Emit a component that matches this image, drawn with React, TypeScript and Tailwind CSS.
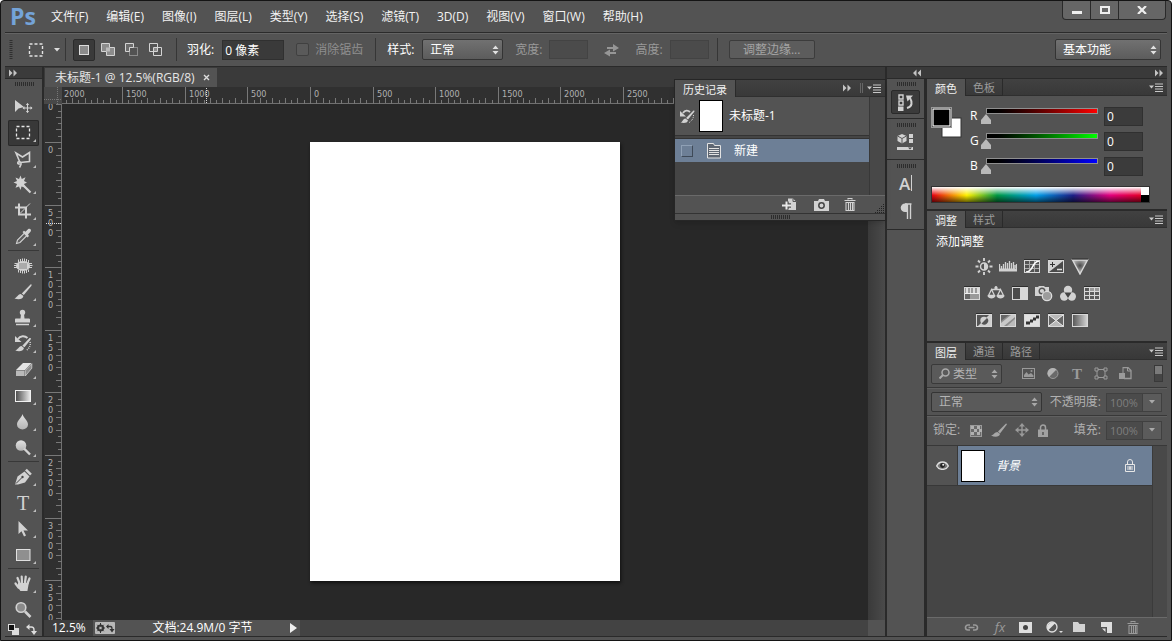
import React from "react";
import type { ReactNode } from "react";

const LIGHT = "#d2d2d2";
const DIM = "#9a9a9a";

function Svg({ w, h, children, className = "" }: { w: number; h: number; children: ReactNode; className?: string }) {
  return (
    <svg width={w} height={h} viewBox={`0 0 ${w} ${h}`} className={`shrink-0 ${className}`} aria-hidden="true">
      {children}
    </svg>
  );
}

/* ---------- small shared pieces ---------- */

function UpDown({ color = "#dcdcdc" }: { color?: string }) {
  return (
    <Svg w={7} h={10}>
      <path d="M3.5 0.5L6.5 4h-6zM3.5 9.5L6.5 6h-6z" fill={color} />
    </Svg>
  );
}

function Chevrons({ left = false }: { left?: boolean }) {
  return (
    <Svg w={10} h={8} className={left ? "rotate-180" : ""}>
      <path d="M1 0.5l3.5 3.5L1 7.5zM5.5 0.5L9 4 5.5 7.5z" fill="#c4c4c4" />
    </Svg>
  );
}

function PanelMenu() {
  return (
    <button aria-label="面板菜单" className="flex items-center">
      <Svg w={15} h={9}>
        <path d="M0 2.5h5L2.5 5.5z" fill="#c8c8c8" />
        <path d="M6 1h8M6 3.5h8M6 6h8M6 8.5h8" stroke="#c8c8c8" />
      </Svg>
    </button>
  );
}

function Grip() {
  return (
    <Svg w={20} h={4}>
      <path d="M1 2h19" stroke="#2c2c2c" strokeWidth="4" strokeDasharray="1 1" />
    </Svg>
  );
}

function Dropdown({ label, value, className, dim = false }: { label: string; value: string; className: string; dim?: boolean }) {
  return (
    <div className={`relative ${className}`}>
      <select
        aria-label={label}
        className={`h-full w-full appearance-none rounded-xs border border-[#343434] px-[7px] text-xs leading-none outline-none ${
          dim ? "bg-[#5a5a5a] text-[#b4b4b4]" : "bg-linear-to-b from-[#717171] to-[#5c5c5c] text-white"
        }`}
      >
        <option>{value}</option>
      </select>
      <div className="pointer-events-none absolute inset-y-0 right-1 flex items-center">
        <UpDown color={dim ? "#a8a8a8" : "#e0e0e0"} />
      </div>
    </div>
  );
}

function Tabs({ tabs, children }: { tabs: string[]; children?: ReactNode }) {
  return (
    <div className="flex h-[17px] shrink-0 items-stretch bg-linear-to-b from-[#414141] to-[#383838] text-[11px] leading-none">
      {tabs.map((tab, i) => (
        <button
          key={tab}
          className={
            i === 0
              ? "border-r border-[#2a2a2a] bg-[#535353] px-2 pt-px text-[#f0f0f0]"
              : "border-r border-b border-[#2a2a2a] px-[7px] pt-px text-[#9b9b9b]"
          }
        >
          {tab}
        </button>
      ))}
      <div className="flex flex-1 items-center justify-end gap-1 border-b border-[#2f2f2f] pr-[3px]">{children ?? <PanelMenu />}</div>
    </div>
  );
}

/* ---------- menu bar ---------- */

const menus = ["文件(F)", "编辑(E)", "图像(I)", "图层(L)", "类型(Y)", "选择(S)", "滤镜(T)", "3D(D)", "视图(V)", "窗口(W)", "帮助(H)"];

function MenuBar() {
  return (
    <header className="flex h-[31px] shrink-0 items-center pr-[5px] pl-[9px]">
      <span className="w-[41px] font-['Open_Sans'] text-[23px] leading-none font-bold text-[#74a3d8]">Ps</span>
      <nav className="flex flex-1 gap-[18px] text-xs text-[#f2f2f2]">
        {menus.map((m) => (
          <button key={m} className="whitespace-nowrap">
            {m}
          </button>
        ))}
      </nav>
      <div className="flex h-[19px] self-start rounded-b-sm border border-t-0 border-[#2a2a2a] bg-[#666666]">
        <button aria-label="最小化" className="flex w-7 items-center justify-center border-r border-[#2a2a2a]">
          <Svg w={10} h={10}>
            <path d="M0 7.5h10" stroke="#eee" strokeWidth="3" />
          </Svg>
        </button>
        <button aria-label="最大化" className="flex w-7 items-center justify-center border-r border-[#2a2a2a]">
          <Svg w={10} h={8}>
            <rect x="1" y="1" width="8" height="6" fill="none" stroke="#eee" strokeWidth="2" />
          </Svg>
        </button>
        <button aria-label="关闭" className="flex w-[46px] items-center justify-center">
          <Svg w={10} h={8}>
            <path d="M1 0l8 8M9 0L1 8" stroke="#eee" strokeWidth="2.2" />
          </Svg>
        </button>
      </div>
    </header>
  );
}

/* ---------- options bar ---------- */

function Divider() {
  return <div className="h-[23px] w-px bg-[#363636]" />;
}

function OptionsBar() {
  return (
    <div className="mx-1 flex h-[34px] shrink-0 items-center border-t border-[#2b2b2b] text-xs whitespace-nowrap text-white shadow-[inset_0_1px_0_#646464]">
      <Svg w={4} h={20} className="ml-1">
        <path d="M2 0v20" stroke="#303030" strokeWidth="3" strokeDasharray="1 1" />
      </Svg>
      <button aria-label="矩形选框" className="ml-[15px] flex items-center gap-[10px]">
        <Svg w={16} h={14}>
          <rect x="1.5" y="1" width="13" height="12" fill="none" stroke="#e4e4e4" strokeWidth="1.4" strokeDasharray="3 2" />
        </Svg>
        <Svg w={6} h={4}>
          <path d="M0 0h6L3 3.5z" fill="#ddd" />
        </Svg>
      </button>
      <div className="mr-[7px] ml-[5px]">
        <Divider />
      </div>
      <button aria-label="新选区" className="flex size-[22px] items-center justify-center rounded-xs border border-[#2b2b2b] bg-[#3a3a3a]">
        <Svg w={12} h={12}>
          <rect x="1.5" y="1.5" width="9" height="9" fill="#8c8c8c" stroke="#ddd" />
        </Svg>
      </button>
      <div className="ml-[6px] flex gap-[10px]">
        <button aria-label="添加到选区">
          <Svg w={14} h={14}>
            <path d="M.5.5h8v4h5v8h-8v-4h-5z" fill="#8c8c8c" stroke="#d4d4d4" />
            <path d="M5 4.500h4v4H5z" fill="#bbb" />
          </Svg>
        </button>
        <button aria-label="从选区减去">
          <Svg w={14} h={14}>
            <rect x="4.5" y="4.500" width="8" height="8" fill="none" stroke="#8c8c8c" />
            <path d="M.5.5h8v4h-4v4h-4z" fill="#6c6c6c" stroke="#d4d4d4" />
          </Svg>
        </button>
        <button aria-label="与选区交叉">
          <Svg w={14} h={14}>
            <path d="M.5.5h8v8h-8z M4.500 4.500h8v8h-8z" fill="none" stroke="#d4d4d4" />
            <path d="M5 5h3v3H5z" fill="#8c8c8c" />
          </Svg>
        </button>
      </div>
      <div className="mr-[10px] ml-[13px]">
        <Divider />
      </div>
      <label className="flex items-center gap-2">
        羽化:
        <input defaultValue="0 像素" className="h-5 w-[62px] border border-[#303030] bg-[#3a3a3a] px-[2px] text-xs outline-none" />
      </label>
      <label className="ml-3 flex items-center gap-[6px] text-[#8f8f8f]">
        <input type="checkbox" disabled className="size-[13px] appearance-none rounded-xs border border-[#404040] bg-[#5a5a5a]" />
        消除锯齿
      </label>
      <div className="mr-[11px] ml-3">
        <Divider />
      </div>
      <span>样式:</span>
      <Dropdown label="样式" value="正常" className="ml-2 h-[21px] w-[81px]" />
      <label className="ml-3 flex items-center gap-[7px] text-[#9a9a9a]">
        宽度:
        <input disabled className="h-[19px] w-[39px] border border-[#434343] bg-[#4b4b4b]" />
      </label>
      <button aria-label="高度和宽度互换" className="mx-4">
        <Svg w={15} h={14}>
          <path d="M3 4h6V1l6 4-6 3.500V6H3z M12 9H6V6.500L0 10l6 3.500V11h6z" fill="#969696" />
        </Svg>
      </button>
      <label className="flex items-center gap-[7px] text-[#9a9a9a]">
        高度:
        <input disabled className="h-[19px] w-[39px] border border-[#434343] bg-[#4b4b4b]" />
      </label>
      <div className="mr-[11px] ml-2">
        <Divider />
      </div>
      <button className="h-[19px] w-[86px] rounded-xs border border-[#3c3c3c] bg-[#5c5c5c] text-[#a4a4a4]">调整边缘...</button>
      <div className="flex-1" />
      <Dropdown label="工作区" value="基本功能" className="mr-[6px] h-[21px] w-[106px]" />
    </div>
  );
}

/* ---------- toolbar, icons drawn on a 31x26 grid ---------- */

type Tool = { name: string; art: ReactNode; single?: boolean };

const groups: Tool[][] = [
  [
    {
      name: "移动",
      single: true,
      art: (
        <>
          <path d="M7 6v12l3.500-3.500L16 13z" fill={LIGHT} />
          <path d="M19.500 9.500v9M15 14h9" stroke={LIGHT} strokeWidth="1.100" />
          <path d="M19.500 9l1.700 2h-3.400zM19.500 19l1.700-2h-3.400zM14.500 14l2-1.700v3.400zM24.500 14l-2-1.700v3.400z" fill={LIGHT} />
        </>
      ),
    },
    {
      name: "矩形选框",
      art: <rect x="8.500" y="6.500" width="13" height="12" fill="none" stroke="#e6e6e6" strokeWidth="1.300" strokeDasharray="3 2" />,
    },
    {
      name: "多边形套索",
      art: (
        <g fill="none" stroke={LIGHT} strokeWidth="1.600">
          <path d="M12 16.500L8 7l6.500 4L21.500 6.500V15.500L12 16.500" />
          <path d="M12 15.500c-3 0-3 3 0 2.500M12 16c2 1 1 3-.5 5.500" />
        </g>
      ),
    },
    {
      name: "魔棒",
      art: (
        <>
          <path d="M12.500 3.500l1.300 3.500 3.700-1.700L16 9l3 1.500-3 1.600 1 3.400-3.500-1-1 3.500-1.500-3.500-3.500 1.300L9 12 5.500 10.500 9 9 7.500 5.500 11 7z" fill={LIGHT} />
          <path d="M15 13l7.500 7.500" stroke={LIGHT} strokeWidth="2.200" />
        </>
      ),
    },
    {
      name: "裁剪",
      art: (
        <>
          <path d="M11 5.500v11h12M7 9.500h11v11" fill="none" stroke={LIGHT} strokeWidth="2" />
          <path d="M22 5.500l-10 10" stroke={LIGHT} />
        </>
      ),
    },
    {
      name: "吸管",
      art: (
        <>
          <path d="M8.500 19.500l1-3.500 7-7 2.500 2.500-7 7z" fill="#5f5f5f" stroke={LIGHT} strokeWidth="1.100" />
          <path d="M14.500 8l1.500-1.200 1.500 1L20 5.200c2-1.500 4 .8 2.500 2.600L20 10.500l1 1.500-1.500 1.500z" fill={LIGHT} />
        </>
      ),
    },
  ],
  [
    {
      name: "污点修复",
      art: (
        <>
          <ellipse cx="15" cy="13" rx="7" ry="5" fill={LIGHT} />
          <path d="M10.500 6.500v3M12.500 6v3M14.500 5.500v3M16.500 5.500v3M18.500 6v3M20.500 7v3M10.500 17v2.500M12.500 17v3M14.500 17.500v3M16.500 17.500v3M18.500 17v3M20.500 16.500v2.500M6.500 10.500h3M6 12.500h3M6 14.500h3M21 10.500h3M21.500 12.500h3M21 14.500h3" stroke={LIGHT} />
          <rect x="11" y="10" width="8" height="6" fill="#aaa" />
        </>
      ),
    },
    {
      name: "画笔",
      art: (
        <path d="M22.500 5.500c1.200-.5 1.500.5.800 1.500l-7.500 9-2-1.500zM12.800 15l2.600 2c-.5 3.500-5 4-8.900 2.500 2.500-.8 3-4 6.300-4.500z" fill={LIGHT} />
      ),
    },
    {
      name: "仿制图章",
      art: (
        <>
          <circle cx="14.500" cy="7.500" r="2.700" fill={LIGHT} />
          <path d="M13 9h3l.5 4.500h4.500c1 0 1 1 1 1v3H7v-3c0-.5.3-1 1-1h4.500z" fill={LIGHT} />
          <path d="M8 19.500h13" stroke={LIGHT} strokeWidth="1.500" />
        </>
      ),
    },
    {
      name: "历史记录画笔",
      art: (
        <>
          <path d="M21.500 7c1.800-.3 1.800.5 1 1.700l-6 7.600-2.200-1.500zM13.500 15l2.500 2c-.8 3.500-5.200 4-8.700 2.500 2.700-.8 3.200-4 6.200-4.500z" fill={LIGHT} />
          <path d="M10 8c2-3.500 7-3.500 9.500-1" fill="none" stroke={LIGHT} strokeWidth="1.800" />
          <path d="M7 5v6h6.500z" fill={LIGHT} />
          <path d="M22 11c1 3-1 7-4 8.500" fill="none" stroke={LIGHT} strokeWidth="1.500" strokeDasharray="1 1" />
        </>
      ),
    },
    {
      name: "橡皮擦",
      art: (
        <>
          <path d="M15 6h8.500L17 13H8z" fill="#e4e4e4" />
          <path d="M8 13.500h8.500V19H8z" fill="#b9b9b9" />
          <path d="M17.300 13.500L23.800 6.700v4.500L17.300 19z" fill="#8d8d8d" stroke={LIGHT} strokeWidth=".8" />
        </>
      ),
    },
    {
      name: "渐变",
      art: <rect x="7.500" y="7.500" width="15" height="11" fill="url(#toolGradient)" stroke="#f0f0f0" />,
    },
    {
      name: "模糊",
      art: <path d="M14.500 5c1 4 5.500 6.500 5.500 10.500a5.500 5 0 0 1-11 0C9 11.500 13.500 9 14.500 5z" fill="url(#toolFill)" />,
    },
    {
      name: "减淡",
      art: (
        <>
          <circle cx="13" cy="10.500" r="5.300" fill="url(#toolFill)" />
          <path d="M16 13.500l6 6" stroke={LIGHT} strokeWidth="2.400" />
        </>
      ),
    },
  ],
  [
    {
      name: "钢笔",
      art: (
        <>
          <path d="M7 20.500l2.500-8 7-5 5 5-4.500 6-7 2z" fill={LIGHT} />
          <path d="M17 6.500l1.800-1.800 5 5L22 11.500z" fill={LIGHT} />
          <path d="M8 19.500l6-6" stroke="#444" />
          <circle cx="14.500" cy="13" r="1.200" fill="#444" />
        </>
      ),
    },
    {
      name: "文字",
      art: (
        <text x="15" y="20" textAnchor="middle" fill={LIGHT} fontSize="20" fontFamily="Liberation Serif, serif">
          T
        </text>
      ),
    },
    {
      name: "路径选择",
      art: <path d="M10.500 5v13l3-2.800 2.500 5.300 2-1-2.500-5h4.500z" fill={LIGHT} />,
    },
    {
      name: "矩形",
      art: <rect x="8.500" y="7.500" width="13.500" height="11" fill="#8f8f8f" stroke="#e0e0e0" />,
    },
  ],
  [
    {
      name: "抓手",
      art: (
        <g fill="none" stroke={LIGHT} strokeLinecap="round" strokeWidth="2.200">
          <path d="M11.500 12L9.500 7M14 11.500l-.3-6M17 11.500l.8-6M19.500 12.500l2-5M10.500 16.500L7.500 12.500" />
          <path d="M11 13l8.500 0-1 6h-5.500l-2.500-3.500z" fill={LIGHT} />
        </g>
      ),
    },
    {
      name: "缩放",
      single: true,
      art: (
        <>
          <circle cx="13" cy="10.500" r="4.800" fill="#8a8a8a" stroke={LIGHT} strokeWidth="1.600" />
          <path d="M17 14.500l5.500 5.500" stroke={LIGHT} strokeWidth="2.600" />
        </>
      ),
    },
  ],
];

function Toolbar() {
  return (
    <aside className="flex w-[37px] shrink-0 flex-col items-center bg-[#535353]">
      <div className="flex h-3 w-full items-center border-b border-[#2a2a2a] bg-[#3b3b3b] pl-[3px]">
        <Chevrons />
      </div>
      <div className="mt-[3px] mb-2 flex">
        <Grip />
      </div>
      {groups.map((group, g) => (
        <div key={g} className={g > 0 ? "border-t border-[#383838] pt-[2px]" : ""}>
          {group.map((tool) => (
            <button
              key={tool.name}
              aria-label={tool.name}
              className={`block h-[26px] w-[31px] ${tool.name === "矩形选框" ? "rounded-xs bg-[#383838] shadow-[inset_0_0_0_1px_#292929]" : ""}`}
            >
              <Svg w={31} h={26} className="block">
                <defs>
                  <linearGradient id="toolGradient">
                    <stop offset="0" stopColor="#4a4a4a" />
                    <stop offset="1" stopColor="#ededed" />
                  </linearGradient>
                  <linearGradient id="toolFill" x2="0" y2="1">
                    <stop offset="0" stopColor="#e2e2e2" />
                    <stop offset="1" stopColor="#b5b5b5" />
                  </linearGradient>
                </defs>
                {tool.art}
                {!tool.single && <path d="M28 19v3h-3z" fill="#bdbdbd" />}
              </Svg>
            </button>
          ))}
        </div>
      ))}
      <div className="flex w-full flex-1 items-center justify-between pr-[5px] pl-[3px]">
        <button aria-label="默认颜色">
          <Svg w={11} h={11}>
            <rect x="4" y="4" width="7" height="7" fill="#ddd" />
            <rect x=".5" y=".5" width="6" height="6" fill="#111" stroke="#ddd" />
          </Svg>
        </button>
        <button aria-label="切换颜色">
          <Svg w={11} h={11}>
            <path d="M3 3h2.500q2.500 0 2.500 3v2" fill="none" stroke="#ddd" strokeWidth="1.400" />
            <path d="M3.500 0v6L0 3zM5 7h6L8 11z" fill="#ddd" />
          </Svg>
        </button>
      </div>
    </aside>
  );
}

/* ---------- document window ---------- */

// 500 document pixels at 12.5% zoom
const STEP = 62.6;
const MINOR = [1, 2, 3, 4, 5, 6, 7, 8, 9];

function range(from: number, to: number) {
  return Array.from({ length: to - from + 1 }, (_, i) => from + i);
}

function RulerTop() {
  const origin = 248;
  return (
    <svg className="h-[17px] min-w-0 flex-1 bg-[#303030]" width="100%" height="17" aria-hidden="true">
      <path d="M0 16.500h3000" stroke="#707070" />
      {range(-4, 30).map((n) => {
        const x = Math.round(origin + n * STEP) + 0.5;
        return (
          <g key={n}>
            <path d={`M${x} 0v17`} stroke="#787878" />
            {MINOR.map((m) => {
              const mx = Math.round(origin + (n + m / 10) * STEP) + 0.5;
              return <path key={m} d={`M${mx} ${m % 2 ? 13 : 11}v5`} stroke="#787878" />;
            })}
            {n <= 5 && (
              <text x={x + 3.5} y="10" fill="#b0b0b0" fontSize="9" fontFamily="DejaVu Sans Condensed, sans-serif">
                {Math.abs(n * 500)}
              </text>
            )}
          </g>
        );
      })}
      <path d="M144.500 1v15" stroke="#ddd" strokeDasharray="1 1" />
    </svg>
  );
}

function RulerLeft() {
  const origin = 38;
  return (
    <svg className="h-full w-[18px] shrink-0 bg-[#303030]" width="18" aria-hidden="true">
      <path d="M17.500 0v3000" stroke="#707070" />
      {range(-1, 7).map((n) => {
        const y = Math.round(origin + n * STEP) + 0.5;
        return (
          <g key={n}>
            <path d={`M1 ${y}h17`} stroke="#787878" />
            {MINOR.map((m) => {
              const my = Math.round(origin + (n + m / 10) * STEP) + 0.5;
              return <path key={m} d={`M${m % 2 ? 14 : 12} ${my}h5`} stroke="#787878" />;
            })}
            {String(Math.abs(n * 500))
              .split("")
              .map((d, i) => {
                const base = y + 10.5 + i * 10;
                if (base < 0) return null;
                return (
                  <text key={i} x="4" y={base} fill="#b0b0b0" fontSize="9" fontFamily="DejaVu Sans Condensed, sans-serif">
                    {d}
                  </text>
                );
              })}
          </g>
        );
      })}
      <path d="M2 119.500h15" stroke="#ddd" strokeDasharray="1 1" />
    </svg>
  );
}

function HistoryPanel() {
  return (
    <section className="absolute top-3 -right-px z-10 w-[212px] border border-[#262626] bg-[#535353] text-xs text-white shadow-md">
      <Tabs tabs={["历史记录"]}>
        <Chevrons />
        <div className="ml-1 h-[10px] w-[3px] border-x border-[#666]" />
        <PanelMenu />
      </Tabs>
      <div className="flex h-[98px]">
        <div className="flex flex-1 flex-col bg-[#454545]">
          <div className="flex h-[39px] items-center border-b border-[#333] bg-[#535353] pl-[5px]">
            <Svg w={15} h={15}>
              <path d="M13.500 1.500c1.200-.3 1.300.6.6 1.500L8 10.500 6 9zM5.500 9.500L8 11.500c-.5 2.500-4 3-7.500 2 2.500-.7 2-3.500 5-4z" fill={LIGHT} />
              <path d="M3 4c2-3 5-3 7-1" fill="none" stroke={LIGHT} strokeWidth="1.800" />
              <path d="M0 2v5.500h6z" fill={LIGHT} />
              <path d="M13.500 6c0 4-2 6-5 8" fill="none" stroke={LIGHT} strokeDasharray="1 1" />
            </Svg>
            <div className="ml-1 h-8 w-6 border border-black bg-white" />
            <span className="ml-[6px]">未标题-1</span>
          </div>
          <div className="mt-[2px] flex h-6 items-center border-t border-[#333] bg-[#6d7f96] pl-[6px]">
            <div className="size-3 border border-t-[#8fa0b5] border-r-[#3f4a58] border-b-[#3f4a58] border-l-[#8fa0b5]" />
            <Svg w={15} h={16} className="ml-[14px]">
              <path d="M.5.5h6l1 2h6v12.500H.5z" fill="#5e6672" stroke="#e2e2e2" />
              <path d="M2 5.500h10M2 7.500h10M2 9.500h10M2 11.500h10" stroke="#e2e2e2" />
            </Svg>
            <span className="ml-3">新建</span>
          </div>
        </div>
        <div className="w-4 border-l border-[#383838] bg-[#484848]" />
      </div>
      <div className="flex h-[18px] items-center border-t border-[#6a6a6a] pl-[107px]">
        <button aria-label="从当前状态创建新文档">
          <Svg w={15} h={13}>
            <path d="M6 .5h5l3 3V12H6z" fill={LIGHT} />
            <path d="M11 .5v3h3" fill="none" stroke="#555" />
            <path d="M0 7.500h9M4.500 3.500v8" stroke="#535353" strokeWidth="4.500" />
            <path d="M0 7.500h9M4.500 3.500v8" stroke="#e8e8e8" strokeWidth="2" />
          </Svg>
        </button>
        <button aria-label="创建新快照" className="ml-[17px]">
          <Svg w={15} h={12}>
            <path d="M0 2h4l1-2h5l1 2h4v10H0z" fill={LIGHT} />
            <circle cx="7.500" cy="6.500" r="2.700" fill="none" stroke="#444" strokeWidth="1.500" />
          </Svg>
        </button>
        <button aria-label="删除当前状态" className="ml-[15px]">
          <Trash color={LIGHT} />
        </button>
        <Svg w={10} h={10} className="mt-auto ml-auto">
          <path d="M8.500 1v9M6.500 3v7M4.500 5v5M2.500 7v3M.5 9v1" stroke="#222" strokeDasharray="1 1" />
        </Svg>
      </div>
      <div className="flex h-[7px] items-center justify-center border-t border-[#333]">
        <Grip />
      </div>
    </section>
  );
}

function Trash({ color }: { color: string }) {
  return (
    <Svg w={12} h={13}>
      <path d="M4 1.500V.5h4v1M.5 2.500h11M2 4.500v8h8v-8zM4.500 5v7M6.500 5v7M8.500 5v7" fill="none" stroke={color} strokeWidth="1.100" />
    </Svg>
  );
}

function DocumentWindow() {
  return (
    <main className="relative flex min-w-0 flex-1 flex-col">
      <div className="flex h-5 shrink-0 items-stretch bg-[#3a3a3a] pt-px pl-px">
        <div className="flex items-center gap-2 bg-[#535353] pr-[7px] pl-[10px] text-xs text-[#e6e6e6]">
          <span>未标题-1 @ 12.5%(RGB/8)</span>
          <button aria-label="关闭文档">
            <Svg w={7} h={7}>
              <path d="M1 1l5 5M6 1L1 6" stroke="#ddd" strokeWidth="1.400" />
            </Svg>
          </button>
        </div>
      </div>
      <div className="flex h-[17px] shrink-0">
        <Svg w={18} h={17} className="bg-[#484848]">
          <path d="M0 12.500h18M13.500 0v17" stroke="#777" strokeDasharray="1 1" />
        </Svg>
        <RulerTop />
      </div>
      <div className="flex min-h-0 flex-1 overflow-hidden">
        <RulerLeft />
        <div className="flex flex-1 items-center justify-center bg-[#282828] pb-px">
          <div className="h-[439px] w-[310px] bg-white shadow-[1px_2px_3px_#111]" />
        </div>
        <div className="w-[17px] bg-linear-to-r from-[#3a3a3a] to-[#4a4a4a]" />
      </div>
      <footer className="flex h-4 shrink-0 items-center bg-[#434343] text-xs leading-none whitespace-nowrap text-white">
        <span className="flex h-full w-[49px] items-center bg-[#3d3d3d] pl-2">12.5%</span>
        <div className="flex h-full w-[207px] items-center justify-between bg-[#535353] pr-[3px] pl-[2px]">
          <Svg w={20} h={12}>
            <rect width="20" height="12" rx="1" fill="#b8b8b8" />
            <circle cx="5.500" cy="6" r="2.700" fill="none" stroke="#333" strokeWidth="1.800" />
            <path d="M5.500 1v10M1 6h9M2.300 2.800l6.400 6.400M8.700 2.800L2.300 9.200" stroke="#333" strokeWidth="1" />
            <circle cx="5.500" cy="6" r="1.200" fill="#b8b8b8" />
            <path d="M13 4.500h2.500q1.500 0 1.500 2.500v1" fill="none" stroke="#333" strokeWidth="1.300" />
            <path d="M13.500 2v5L11 4.500zM14.500 7h5L17 10.500z" fill="#333" />
          </Svg>
          <span>文档:24.9M/0 字节</span>
          <button aria-label="状态菜单">
            <Svg w={7} h={10}>
              <path d="M0 0l7 5-7 5z" fill="#f0f0f0" />
            </Svg>
          </button>
        </div>
        <div className="ml-auto h-full w-[17px] bg-[#535353]" />
      </footer>
      <HistoryPanel />
    </main>
  );
}

/* ---------- collapsed dock ---------- */

function Dock() {
  return (
    <div className="flex w-[37px] shrink-0 flex-col bg-[#535353]">
      <div className="flex h-10 flex-col items-center gap-1 border-b border-[#2a2a2a] pt-[3px]">
        <Grip />
        <button aria-label="历史记录" className="flex h-6 w-[29px] items-center justify-center rounded-xs border border-[#2a2a2a] bg-[#3b3b3b]">
          <Svg w={16} h={17}>
            <path d="M1 1h4v4H1zM1 7h4v4H1z" fill="none" stroke={LIGHT} strokeWidth="1.400" />
            <path d="M0 12.500h5.500V17H0z" fill={LIGHT} />
            <path d="M9 14c5.500-1.500 5.500-6 3-10" fill="none" stroke={LIGHT} strokeWidth="2" />
            <path d="M8 1.500h7l-5.500 6z" fill={LIGHT} />
          </Svg>
        </button>
      </div>
      <div className="flex h-[41px] flex-col items-center gap-[6px] border-b border-[#2a2a2a] pt-1">
        <Grip />
        <button aria-label="属性">
          <Svg w={17} h={18}>
            <path d="M5 1l4.500 2v5L5 10.500.5 8V3z" fill={LIGHT} />
            <path d="M.5 3L5 5.500 9.500 3M5 5.500v5" fill="none" stroke="#555" />
            <path d="M12 1h4v4h-4zM12 6h4v4h-4zM0 14h16v3H0z" fill={LIGHT} />
            <path d="M11 14.500h4l-2 2z" fill="#444" />
          </Svg>
        </button>
      </div>
      <div className="flex h-[70px] flex-col items-center border-b border-[#2a2a2a] pt-1">
        <Grip />
        <button aria-label="字符" className="mt-[6px] flex h-[18px] items-center font-['Open_Sans'] text-[17px] leading-none font-semibold text-[#d2d2d2]">
          A<span className="ml-px h-4 w-px bg-[#d2d2d2]" />
        </button>
        <button aria-label="段落" className="mt-[11px]">
          <Svg w={12} h={17}>
            <path d="M5 1h6.500M7.500 1v15M10.500 1v15" stroke={LIGHT} strokeWidth="1.400" fill="none" />
            <path d="M7 .5H5a4.300 4.300 0 0 0 0 8.600h2z" fill={LIGHT} />
          </Svg>
        </button>
      </div>
    </div>
  );
}

/* ---------- colour panel ---------- */

const channels = [
  { name: "R", bar: "bg-linear-to-r from-black to-[#ff0000]" },
  { name: "G", bar: "bg-linear-to-r from-black to-[#00ff00]" },
  { name: "B", bar: "bg-linear-to-r from-black to-[#0000ff]" },
];

function ColorPanel() {
  return (
    <section className="h-[130px] bg-[#535353]">
      <Tabs tabs={["颜色", "色板"]} />
      <div className="flex pt-[11px] pl-1">
        <Svg w={31} h={31}>
          <rect x="11" y="11" width="19" height="19" fill="#fff" stroke="#333" />
          <rect x=".5" y=".5" width="20" height="20" fill="#000" stroke="#999" />
          <rect x="2" y="2" width="17" height="17" fill="#000" stroke="#fff" strokeWidth="1.200" />
        </Svg>
        <div className="ml-2 flex flex-col gap-[6px]">
          {channels.map((c) => (
            <div key={c.name} className="flex h-[19px] items-center text-xs text-white">
              <label htmlFor={`slider-${c.name}`} className="w-[11px] pb-[2px]">
                {c.name}
              </label>
              <div className="w-[122px] pb-px">
                <div className="mx-[5px] border border-[#8f8f8f]">
                  <div className={`h-1 ${c.bar}`} />
                </div>
                <input
                  id={`slider-${c.name}`}
                  type="range"
                  min={0}
                  max={255}
                  defaultValue={0}
                  className="block h-[10px] w-full appearance-none bg-transparent [&::-webkit-slider-thumb]:h-[10px] [&::-webkit-slider-thumb]:w-[10px] [&::-webkit-slider-thumb]:appearance-none [&::-webkit-slider-thumb]:bg-[#b9b9b9] [&::-webkit-slider-thumb]:[clip-path:polygon(50%_0,100%_60%,100%_100%,0_100%,0_60%)]"
                />
              </div>
              <input aria-label={c.name} defaultValue="0" className="ml-px h-[19px] w-[39px] border border-[#303030] bg-[#3b3b3b] px-[2px] font-['Open_Sans'] text-xs outline-none" />
            </div>
          ))}
        </div>
      </div>
      <div className="mt-[10px] mr-[17px] ml-1 flex h-[17px] border border-[#333] bg-[linear-gradient(to_right,#e60012,#fff100_16%,#009944_30%,#00a0e9_48%,#1d2088_65%,#e4007f_82%,#e60012)]">
        <div className="flex-1 bg-linear-to-b from-white via-transparent via-55% to-black/60" />
        <div className="flex w-2 flex-col">
          <div className="h-1/2 bg-white" />
          <div className="h-1/2 bg-black" />
        </div>
      </div>
    </section>
  );
}

/* ---------- adjustments panel ---------- */

function Frame({ children, fill = "none" }: { children?: ReactNode; fill?: string }) {
  return (
    <>
      <rect x="1.500" y="2.500" width="15" height="12" fill={fill} />
      {children}
      <rect x="1.500" y="2.500" width="15" height="12" fill="none" stroke="#d8d8d8" />
      <path d="M1 1.500h16" stroke="#2e2e2e" />
    </>
  );
}

const adjustments: { name: string; art: ReactNode }[][] = [
  [
    {
      name: "亮度/对比度",
      art: (
        <>
          <circle cx="9" cy="8.500" r="3.500" fill="none" stroke={LIGHT} strokeWidth="1.500" />
          <path d="M9 5a3.500 3.500 0 0 1 0 7z" fill={LIGHT} />
          <path d="M9 0v3M9 14v3M.5 8.500h3M14.500 8.500h3M3 2.500l2 2M13 12.500l2 2M15 2.500l-2 2M5 12.500l-2 2" stroke={LIGHT} strokeWidth="1.900" />
        </>
      ),
    },
    {
      name: "色阶",
      art: (
        <>
          <path d="M0 10.500h18v3H0z" fill={LIGHT} />
          <path d="M.5 6v5M2.500 8v3M4.500 6v5M6.500 4v7M8.500 5v6M10.500 3v8M12.500 5v6M14.500 4v7M16 7v4M17.500 6v5" stroke={LIGHT} strokeWidth="1.300" />
        </>
      ),
    },
    {
      name: "曲线",
      art: (
        <Frame>
          <path d="M6.500 2.500v12M11.500 2.500v12M1.500 6.500h15M1.500 10.500h15" stroke="#aaa" />
          <path d="M3 14C11 14 8 4 16 3" fill="none" stroke="#fff" strokeWidth="1.600" />
        </Frame>
      ),
    },
    {
      name: "曝光度",
      art: (
        <Frame fill="#4a4a4a">
          <path d="M2 14V3h14z" fill={LIGHT} />
          <path d="M3 6.500h5M5.500 4v5" stroke="#333" />
          <path d="M10 11.500h5" stroke="#ddd" strokeWidth="1.500" />
        </Frame>
      ),
    },
    {
      name: "自然饱和度",
      art: (
        <>
          <defs>
            <radialGradient id="vibrance" cy=".4">
              <stop offset="0" stopColor="#4c4c4c" />
              <stop offset="1" stopColor="#b8b8b8" />
            </radialGradient>
          </defs>
          <path d="M1.500 2h15L9 16z" fill="url(#vibrance)" stroke="#d8d8d8" strokeWidth="1.400" />
          <path d="M1 1h16" stroke="#2e2e2e" />
        </>
      ),
    },
  ],
  [
    {
      name: "色相/饱和度",
      art: (
        <Frame fill="#9a9a9a">
          <path d="M3 3h2v5H3zM7 3h1v5H7zM10 3h2v5h-2zM14 3h2v5h-2z" fill="#ddd" />
          <path d="M2 8.500h14" stroke="#eee" />
          <path d="M2 9h5v5H2z" fill="#666" />
        </Frame>
      ),
    },
    {
      name: "色彩平衡",
      art: (
        <>
          <path d="M9 1v4M4.500 4.500h9M4.500 4.500l-3 6h6zM13.500 4.500l-3 6h6z" fill="none" stroke={LIGHT} strokeWidth="1.300" />
          <path d="M.5 10.500h8c-.5 4-7.500 4-8 0zM9.500 10.500h8c-.5 4-7.500 4-8 0z" fill={LIGHT} />
          <circle cx="9" cy="3" r="1.700" fill={LIGHT} />
        </>
      ),
    },
    {
      name: "黑白",
      art: (
        <Frame fill="#4b4b4b">
          <path d="M9 3h7v11H9z" fill="#d8d8d8" />
        </Frame>
      ),
    },
    {
      name: "照片滤镜",
      art: (
        <>
          <path d="M0 2h3l1-1h5l1 1h4v9H0z" fill={LIGHT} />
          <circle cx="7" cy="6" r="2.800" fill="none" stroke="#555" strokeWidth="1.400" />
          <circle cx="12" cy="11" r="4.700" fill="#9c9c9c" stroke="#ddd" strokeWidth="1.300" />
        </>
      ),
    },
    {
      name: "通道混合器",
      art: (
        <>
          <g fill={LIGHT}>
            <circle cx="9" cy="5" r="4.200" />
            <circle cx="5.200" cy="11.500" r="4.200" />
            <circle cx="12.800" cy="11.500" r="4.200" />
          </g>
          <path d="M5.500 7.500h7L9 13z" fill="#444" />
        </>
      ),
    },
    {
      name: "颜色查找",
      art: (
        <Frame fill="#5a5a5a">
          <path d="M6.500 3v11M11.500 3v11M2 6.500h14M2 10.500h14" stroke="#d8d8d8" />
          <path d="M12 3h4v3h-4zM7 3h4v3H7z" fill="#999" />
        </Frame>
      ),
    },
  ],
  [
    {
      name: "反相",
      art: (
        <Frame fill="#d0d0d0">
          <path d="M2 3h12L3 14H2z" fill="#555" />
          <circle cx="9" cy="8.500" r="3.700" fill="#d0d0d0" />
          <path d="M6.500 11.500a3.800 3.800 0 0 0 5.500-5.500z" fill="#555" />
        </Frame>
      ),
    },
    {
      name: "色调分离",
      art: (
        <Frame fill="#8d8d8d">
          <path d="M2 11L12 3h4v2L5 14H2z" fill="#c9c9c9" />
          <path d="M8 14l8-7v7z" fill="#bbb" />
          <path d="M2 9l8-6H2z" fill="#666" />
        </Frame>
      ),
    },
    {
      name: "阈值",
      art: (
        <Frame fill="#e0e0e0">
          <path d="M3 9.500h4v-2h3v-2h3v-2h3v3h-3v2h-3v2H7v2H3z" fill="#333" />
        </Frame>
      ),
    },
    {
      name: "可选颜色",
      art: (
        <Frame fill="#b8b8b8">
          <path d="M2 3l7 5.500L2 14zM16 3L9 8.500l7 5.500z" fill="#666" />
          <path d="M2 3l14 11M16 3L2 14" stroke="#eee" />
        </Frame>
      ),
    },
    {
      name: "渐变映射",
      art: (
        <>
          <defs>
            <linearGradient id="mapGradient">
              <stop offset="0" stopColor="#555" />
              <stop offset="1" stopColor="#d5d5d5" />
            </linearGradient>
          </defs>
          <Frame fill="url(#mapGradient)" />
        </>
      ),
    },
  ],
];

function AdjustPanel() {
  return (
    <section className="h-[130px] bg-[#535353]">
      <Tabs tabs={["调整", "样式"]} />
      <h2 className="mt-[6px] ml-[9px] text-xs leading-4 text-white">添加调整</h2>
      <div className="mt-2 ml-[33px] flex w-[144px] flex-col gap-[10px]">
        {adjustments.map((row, i) => (
          <div key={i} className="flex justify-center gap-[6px]">
            {row.map((a) => (
              <button key={a.name} aria-label={a.name}>
                <Svg w={18} h={17}>
                  {a.art}
                </Svg>
              </button>
            ))}
          </div>
        ))}
      </div>
    </section>
  );
}

/* ---------- layers panel ---------- */

function Percent({ label }: { label: string }) {
  return (
    <label className="flex items-center text-[#b0b0b0]">
      {label}:
      <input
        disabled
        defaultValue="100%"
        className="ml-[5px] h-[19px] w-[37px] border border-[#404040] bg-[#4b4b4b] px-[3px] font-['Open_Sans'] text-[11px] text-[#7e7e7e]"
      />
      <span className="flex h-[19px] w-[19px] items-center justify-center border border-l-0 border-[#404040] bg-[#5b5b5b]">
        <Svg w={6} h={4}>
          <path d="M0 0h6L3 3.500z" fill="#aaa" />
        </Svg>
      </span>
    </label>
  );
}

function LayersPanel() {
  return (
    <section className="flex min-h-0 flex-1 flex-col bg-[#535353] text-xs">
      <Tabs tabs={["图层", "通道", "路径"]} />
      <div className="flex h-[28px] items-center border-b border-[#383838] pr-1 pl-1">
        <div className="relative h-5 w-[71px]">
          <select aria-label="滤镜类型" className="h-full w-full appearance-none rounded-xs border border-[#393939] bg-[#5a5a5a] pl-[21px] text-xs leading-none text-[#b4b4b4]">
            <option>类型</option>
          </select>
          <div className="pointer-events-none absolute inset-0 flex items-center justify-between pr-1 pl-2">
            <Svg w={11} h={11}>
              <circle cx="6.500" cy="4.500" r="3.500" fill="none" stroke="#aaa" strokeWidth="1.500" />
              <path d="M4 7L.5 10.500" stroke="#aaa" strokeWidth="2" />
            </Svg>
            <UpDown color="#a8a8a8" />
          </div>
        </div>
        <div className="ml-[20px] flex gap-[10px]">
          <button aria-label="像素图层滤镜">
            <Svg w={14} h={13}>
              <rect x=".5" y="1.500" width="12" height="10" fill="none" stroke={DIM} />
              <path d="M2 10V8l2.500-3 2 2.500L9 6l2.500 2.500V10z" fill={DIM} />
              <circle cx="9.500" cy="4" r="1" fill={DIM} />
            </Svg>
          </button>
          <button aria-label="调整图层滤镜">
            <Svg w={14} h={13}>
              <circle cx="7" cy="6.500" r="5" fill="#6a6a6a" stroke={DIM} />
              <path d="M10.500 2.500A5.300 5.300 0 0 0 3 10z" fill="#b4b4b4" />
            </Svg>
          </button>
          <button aria-label="文字图层滤镜">
            <Svg w={14} h={13}>
              <text x="7" y="11.500" textAnchor="middle" fontSize="15" fontWeight="bold" fontFamily="Liberation Serif, serif" fill={DIM}>
                T
              </text>
            </Svg>
          </button>
          <button aria-label="形状图层滤镜">
            <Svg w={14} h={13}>
              <rect x="3" y="2.500" width="8" height="8" fill="none" stroke={DIM} />
              <path d="M1 1h3v3H1zM10 1h3v3h-3zM1 9h3v3H1zM10 9h3v3h-3z" fill="#535353" stroke={DIM} />
            </Svg>
          </button>
          <button aria-label="智能对象滤镜">
            <Svg w={14} h={13}>
              <path d="M5 .5h5l3 3v8H6" fill="none" stroke={DIM} strokeWidth="1.300" />
              <path d="M9.500.5V4H13M5 0v6" fill="none" stroke={DIM} />
              <path d="M1 6h6v6H1z" fill={DIM} />
            </Svg>
          </button>
        </div>
        <button aria-label="滤镜开关" className="ml-auto h-[17px] w-[9px] border border-[#393939] bg-[#454545]">
          <span className="mb-[7px] block h-2 bg-[#7a7a7a]" />
        </button>
      </div>
      <div className="flex h-[28px] items-center justify-between border-t border-b border-t-[#606060] border-b-[#383838] pr-[5px] pl-1">
        <Dropdown dim label="混合模式" value="正常" className="h-5 w-[111px]" />
        <Percent label="不透明度" />
      </div>
      <div className="flex h-[30px] items-center border-t border-b border-t-[#606060] border-b-[#383838] pr-[5px] pb-[2px] pl-[6px] text-[#b0b0b0]">
        <span>锁定:</span>
        <div className="ml-[10px] flex items-center gap-2">
          <button aria-label="锁定透明像素">
            <Svg w={13} h={13}>
              <rect x=".5" y="1.500" width="11" height="11" fill="#6a6a6a" stroke={DIM} />
              <path d="M1 2h3v3H1zM7 2h3v3H7zM4 5h3v3H4zM9 5h3v3H9zM1 8h3v3H1zM7 8h3v3H7z" fill="#b0b0b0" />
            </Svg>
          </button>
          <button aria-label="锁定图像像素">
            <Svg w={16} h={14}>
              <path d="M15 .5c1 0 1 .8.500 1.500L9 10.500 7 8.500zM6.500 9L9 11c-.7 3-5 3.500-9 1.500C3 12 3.500 9 6.500 9z" fill="#a6a6a6" />
            </Svg>
          </button>
          <button aria-label="锁定位置">
            <Svg w={14} h={14}>
              <path d="M7 1v12M1 7h12" stroke={DIM} strokeWidth="1.400" />
              <path d="M7 0l3 3.500H4zM7 14l3-3.500H4zM0 7l3.500-3v6zM14 7l-3.500-3v6z" fill={DIM} />
            </Svg>
          </button>
          <button aria-label="锁定全部">
            <Svg w={12} h={13}>
              <path d="M3.500 6V3.500a2.500 2.500 0 0 1 5 0V6" fill="none" stroke="#a2a2a2" strokeWidth="1.500" />
              <path d="M1 5.500h10V13H1z" fill="#a2a2a2" />
              <path d="M6 8v3" stroke="#555" strokeWidth="1.500" />
            </Svg>
          </button>
        </div>
        <div className="ml-auto">
          <Percent label="填充" />
        </div>
      </div>
      <div className="flex min-h-0 flex-1 bg-[#454545]">
        <ul className="flex-1">
          <li className="flex h-10 border-b border-[#383838]">
            <button aria-label="切换可见性" className="flex w-[31px] items-center justify-center border-r border-[#383838] bg-[#535353]">
              <Svg w={13} h={9}>
                <path d="M.7 5C3-.3 10-.3 12.300 5 10 9.500 3 9.500.7 5z" fill="#777" stroke="#dedede" strokeWidth="1.400" />
                <circle cx="6.500" cy="4.500" r="2.400" fill="#222" />
                <circle cx="7.200" cy="3.700" r="1" fill="#eee" />
              </Svg>
            </button>
            <div className="flex flex-1 items-center bg-[#6d7f96] pr-[17px] pl-[3px]">
              <div className="h-8 w-6 border border-black bg-white" />
              <span className="ml-[11px] text-white italic">背景</span>
              <Svg w={10} h={13} className="ml-auto">
                <path d="M2.500 5.500V3a2.500 2.500 0 0 1 5 0v2.500M.5 5.500h9v7h-9zM2 8h6M2 10h6" fill="none" stroke="#e6e6e6" />
                <path d="M5 7.500v3" stroke="#e6e6e6" strokeWidth="1.500" />
              </Svg>
            </div>
          </li>
        </ul>
        <div className="w-[15px] border-l border-[#3b3b3b] bg-[#494949]" />
      </div>
      <div className="flex h-[19px] shrink-0 items-center border-t border-[#6a6a6a] pl-[37px]">
        <button aria-label="链接图层">
          <Svg w={15} h={9}>
            <path d="M6 2H4a2.500 2.500 0 0 0 0 5h2M9 2h2a2.500 2.500 0 0 1 0 5H9M4.500 4.500h6" fill="none" stroke={DIM} strokeWidth="1.600" />
          </Svg>
        </button>
        <button aria-label="图层样式" className="ml-[13px] w-4 font-['Open_Sans'] text-[13px] leading-none text-[#9a9a9a] italic">
          fx
        </button>
        <button aria-label="添加图层蒙版" className="ml-[11px]">
          <Svg w={13} h={11}>
            <path d="M0 0h13v11H0z" fill="#dedede" />
            <circle cx="6.500" cy="5.500" r="2.500" fill="#444" />
          </Svg>
        </button>
        <button aria-label="创建调整图层" className="ml-[14px]">
          <Svg w={17} h={13}>
            <circle cx="6" cy="6" r="5" fill="#555" stroke="#dedede" strokeWidth="1.300" />
            <path d="M9.500 2A5.500 5.500 0 0 0 2 9.500z" fill="#dedede" />
            <path d="M13 10h4l-2 2z" fill="#ddd" />
          </Svg>
        </button>
        <button aria-label="创建新组" className="ml-[10px]">
          <Svg w={13} h={10}>
            <path d="M0 0h5l1.500 2H12v8H0z" fill="#d2d2d2" />
          </Svg>
        </button>
        <button aria-label="创建新图层" className="ml-[15px]">
          <Svg w={12} h={11}>
            <path d="M0 0h11v11H6V5H0z" fill="#dedede" />
            <path d="M1 6.500h3.500V10z" fill="#dedede" />
          </Svg>
        </button>
        <button aria-label="删除图层" className="ml-[14px]">
          <Trash color={DIM} />
        </button>
      </div>
    </section>
  );
}

export default function App() {
  return (
    <div className="flex h-screen flex-col overflow-hidden rounded-t-sm border border-[#141414] bg-[#535353] font-['Open_Sans','Noto_Sans_CJK_SC',sans-serif] leading-none">
      <MenuBar />
      <OptionsBar />
      <div className="mx-1 mb-[3px] flex min-h-0 flex-1 gap-[2px] bg-[#2a2a2a] py-px">
        <Toolbar />
        <DocumentWindow />
        <div className="flex w-[280px] shrink-0 flex-col">
          <div className="flex h-[11px] shrink-0 items-center bg-[#3a3a3a] pr-[3px]">
            <div className="flex w-[35px] justify-end">
              <Chevrons left />
            </div>
            <div className="ml-auto">
              <Chevrons />
            </div>
          </div>
          <div className="mt-px flex min-h-0 flex-1 gap-[3px]">
            <Dock />
            <div className="flex min-w-0 flex-1 flex-col gap-[2px]">
              <ColorPanel />
              <AdjustPanel />
              <LayersPanel />
            </div>
          </div>
        </div>
      </div>
    </div>
  );
}
